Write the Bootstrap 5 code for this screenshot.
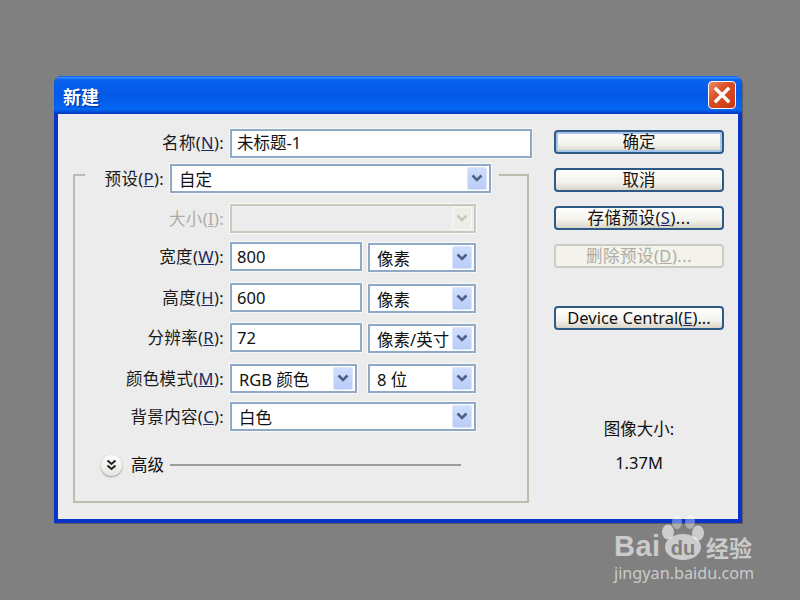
<!DOCTYPE html>
<html lang="zh">
<head>
<meta charset="utf-8">
<title>新建</title>
<link href="https://cdn.jsdelivr.net/npm/bootstrap@5.3.0/dist/css/bootstrap.min.css" rel="stylesheet">
<style>
html,body{height:100%;margin:0;background:#808080;overflow:hidden}
body{font-family:"Noto Sans","Noto Sans CJK SC",sans-serif;font-size:16.5px;color:#111;line-height:1.2}
.desk{position:relative;width:800px;height:600px;background:#808080}
.win{position:absolute;left:54px;top:76px;width:688px;height:447px;background:#0a34c8;border-radius:8px 8px 0 0;box-shadow:1px 1px 0 #5d5d63}
.tbar{height:38px;padding:0 6px 0 9px;background:linear-gradient(#0a53dd 0,#2f8cff 4%,#0a62ee 10%,#0359e6 50%,#0466f2 88%,#0238b8 100%);border-radius:8px 8px 0 0}
.ttl{font-family:"Noto Sans CJK SC",sans-serif;font-weight:700;font-size:18px;padding-top:3px;color:#fff;text-shadow:1px 1px 1px #03289a}
.xbtn{width:28px;height:28px;border:1px solid #fff;border-radius:4px;background:linear-gradient(135deg,#ee8a66,#d84a20 45%,#c93a12);margin-top:-1px}
.client{position:absolute;left:4px;top:38px;width:680px;height:405px;background:#ececec}
.leftc{width:474px}
.rightc{width:170px;margin-left:22px}
.frow{height:29px}
.lbl{flex:none;text-align:right;padding-right:6px;white-space:nowrap;color:#1a1a1a;letter-spacing:.35px}
.lbl u{color:#1b2a66}
.lblup{margin-top:-1px}
.off{color:#aeaca2}.off u{color:#aeaca2}
.w172{width:172px}.w155{width:155px}.w85{width:85px}
.field{height:29px;border:2px solid #8fa9c6;background:#fff;padding:0 5px;outline:1px solid #f8f8f8;color:#111;display:flex;align-items:center;white-space:nowrap;overflow:hidden;border-radius:0;font-size:16.5px;line-height:1.2}
input.field{box-shadow:none}
input.field:focus{border-color:#8fa9c6;outline:1px solid #f8f8f8;box-shadow:none}
input.namef{padding-bottom:3px}
.sel{justify-content:space-between;padding:0 2px 0 7px}
.seltx{padding-top:2px}
.sel.off-f,.field.off-f{background:#ececec;border-color:#cbc9bb}
.arr{flex:none;width:20px;height:23px;background:linear-gradient(#d0defd,#b9ccf8);border:1px solid #dbe5fb;border-radius:2px;display:flex;align-items:center;justify-content:center}
.off-f .arr{background:#eeede6;border-color:#f8f8f4}
.w302{width:302px}.w321{width:321px}.w246{width:246px}.w132{width:132px}.w108{width:108px}.w127{width:127px}
.gbox{margin:16px 3px 0 15px;height:329px;border:2px solid #bdbaae}
.leg{margin:-12px 29px 0 10px;padding-right:8px;background:#ececec;width:414px}
.mt9x{margin-top:9px}.mt11x{margin-top:11px}.mt12x{margin-top:12px}
.sel1{margin-top:1px}
.gap6{margin-left:6px}.gap11{margin-left:11px}
.adv{margin:22px 0 0 26px;height:24px}
.advb{flex:none;width:21px;height:21px;border-radius:50%;background:linear-gradient(#fff,#e6e4dc);box-shadow:0 1px 2px #8a8a8a;margin-right:9px}
.advl{flex:none;width:291px;height:2px;background:#9c9c98;margin-left:6px}
.xbt{display:block;width:170px;height:24px;padding:0;border:2px solid #2f5a86;border-radius:4px;background:linear-gradient(#fff,#f3f2ec 60%,#d9d5ca);color:#111;font-size:16.5px;line-height:1;white-space:nowrap}
.xbt u{color:#1b2a66}
.xbt.dft{box-shadow:inset 0 0 0 2px #a9c4ec}
.xbt:disabled,.xbt.disabled{opacity:1;background:#f3f2ec;border-color:#cdcbc0;color:#aeaca2}
.xbt:disabled u{color:#aeaca2}
.spc{letter-spacing:.5px}
.top16{margin-top:16px}.top14{margin-top:14px}.top38{margin-top:38px}
.info{margin-top:89px;text-align:center;padding-left:0}
.info2{margin-top:14px}
.wm{position:absolute;left:614px;top:512px;width:145px;height:72px;color:rgba(255,255,255,.6);pointer-events:none}
.wm1{position:absolute;left:0;top:17px;font:700 29px/34px "Liberation Sans",sans-serif;letter-spacing:.5px}
.wm2{position:absolute;left:92px;top:20px;font:700 23px/30px "Noto Sans CJK SC",sans-serif;white-space:nowrap}
.wm3{position:absolute;left:0;top:51px;font:400 16.2px/20px "Noto Sans",sans-serif;white-space:nowrap}
.wmsvg{position:absolute;left:48px;top:0}
.wmdu{font:700 20px "Liberation Sans",sans-serif;fill:#808080}
</style>
</head>
<body>
<div class="desk">
  <div class="win">
    <div class="tbar d-flex align-items-center justify-content-between">
      <span class="ttl">新建</span>
      <span class="xbtn d-flex align-items-center justify-content-center">
        <svg width="18" height="18" viewBox="0 0 18 18"><path d="M3 3l12 12M15 3L3 15" stroke="#fff" stroke-width="3.4" stroke-linecap="square"/></svg>
      </span>
    </div>
    <div class="client d-flex">
      <div class="leftc">
        <div class="frow d-flex align-items-center" style="margin-top:15px">
          <label class="lbl lblup w172">名称(<u>N</u>):</label>
          <input class="field form-control namef w302" value="未标题-1">
        </div>
        <div class="gbox">
          <div class="frow d-flex align-items-center leg">
            <label class="lbl w85">预设(<u>P</u>):</label>
            <div class="field sel w321"><span class="seltx">自定</span><span class="arr"><svg width="12" height="9" viewBox="0 0 12 9"><path d="M1.5 1.5L6 6l4.5-4.5" fill="none" stroke="#4d6185" stroke-width="2.6"/></svg></span></div>
          </div>
          <div class="frow d-flex align-items-center mt11x">
            <label class="lbl w155 off">大小(<u>I</u>):</label>
            <div class="field sel off-f w246"><span></span><span class="arr"><svg width="12" height="9" viewBox="0 0 12 9"><path d="M1.5 1.5L6 6l4.5-4.5" fill="none" stroke="#c8c8c0" stroke-width="2.6"/></svg></span></div>
          </div>
          <div class="frow d-flex align-items-start mt9x">
            <label class="lbl w155 align-self-center">宽度(<u>W</u>):</label>
            <input class="field form-control w132" value="800">
            <div class="field sel gap6 sel1 w108"><span class="seltx">像素</span><span class="arr"><svg width="12" height="9" viewBox="0 0 12 9"><path d="M1.5 1.5L6 6l4.5-4.5" fill="none" stroke="#4d6185" stroke-width="2.6"/></svg></span></div>
          </div>
          <div class="frow d-flex align-items-start mt12x">
            <label class="lbl w155 align-self-center">高度(<u>H</u>):</label>
            <input class="field form-control w132" value="600">
            <div class="field sel gap6 sel1 w108"><span class="seltx">像素</span><span class="arr"><svg width="12" height="9" viewBox="0 0 12 9"><path d="M1.5 1.5L6 6l4.5-4.5" fill="none" stroke="#4d6185" stroke-width="2.6"/></svg></span></div>
          </div>
          <div class="frow d-flex align-items-start mt11x">
            <label class="lbl w155 align-self-center">分辨率(<u>R</u>):</label>
            <input class="field form-control w132" value="72">
            <div class="field sel gap6 sel1 w108"><span class="seltx">像素/英寸</span><span class="arr"><svg width="12" height="9" viewBox="0 0 12 9"><path d="M1.5 1.5L6 6l4.5-4.5" fill="none" stroke="#4d6185" stroke-width="2.6"/></svg></span></div>
          </div>
          <div class="frow d-flex align-items-center mt12x">
            <label class="lbl w155">颜色模式(<u>M</u>):</label>
            <div class="field sel w127"><span class="seltx">RGB 颜色</span><span class="arr"><svg width="12" height="9" viewBox="0 0 12 9"><path d="M1.5 1.5L6 6l4.5-4.5" fill="none" stroke="#4d6185" stroke-width="2.6"/></svg></span></div>
            <div class="field sel gap11 w108"><span class="seltx">8 位</span><span class="arr"><svg width="12" height="9" viewBox="0 0 12 9"><path d="M1.5 1.5L6 6l4.5-4.5" fill="none" stroke="#4d6185" stroke-width="2.6"/></svg></span></div>
          </div>
          <div class="frow d-flex align-items-center mt9x">
            <label class="lbl w155">背景内容(<u>C</u>):</label>
            <div class="field sel w246"><span class="seltx">白色</span><span class="arr"><svg width="12" height="9" viewBox="0 0 12 9"><path d="M1.5 1.5L6 6l4.5-4.5" fill="none" stroke="#4d6185" stroke-width="2.6"/></svg></span></div>
          </div>
          <div class="adv d-flex align-items-center">
            <span class="advb d-flex align-items-center justify-content-center"><svg width="11" height="12" viewBox="0 0 11 12"><path d="M1.5 1.5l4 3.5 4-3.5M1.5 6.5l4 3.5 4-3.5" fill="none" stroke="#222" stroke-width="2"/></svg></span>
            <span>高级</span>
            <span class="advl"></span>
          </div>
        </div>
      </div>
      <div class="rightc">
        <button type="button" class="btn xbt dft top16">确定</button>
        <button type="button" class="btn xbt top14">取消</button>
        <button type="button" class="btn xbt spc top14">存储预设(<u>S</u>)...</button>
        <button type="button" class="btn xbt spc top14" disabled>删除预设(<u>D</u>)...</button>
        <button type="button" class="btn xbt top38">Device Central(<u>E</u>)...</button>
        <div class="info">图像大小:</div>
        <div class="info info2">1.37M</div>
      </div>
    </div>
  </div>
  <div class="wm">
    <svg class="wmsvg" width="46" height="50" viewBox="0 0 46 50" fill="currentColor">
      <ellipse cx="15" cy="10" rx="5" ry="7" opacity=".6"/>
      <ellipse cx="28" cy="10" rx="5" ry="7" opacity=".6"/>
      <ellipse cx="6" cy="20" rx="6" ry="7.5"/>
      <ellipse cx="36" cy="21" rx="6" ry="7.5"/>
      <ellipse cx="21" cy="35" rx="18" ry="13"/>
      <text x="21" y="43" text-anchor="middle" class="wmdu">du</text>
    </svg>
    <span class="wm1">Bai</span>
    <span class="wm2">经验</span>
    <span class="wm3">jingyan.baidu.com</span>
  </div>
</div>
<script src="https://cdn.jsdelivr.net/npm/bootstrap@5.3.0/dist/js/bootstrap.bundle.min.js"></script>
</body>
</html>
